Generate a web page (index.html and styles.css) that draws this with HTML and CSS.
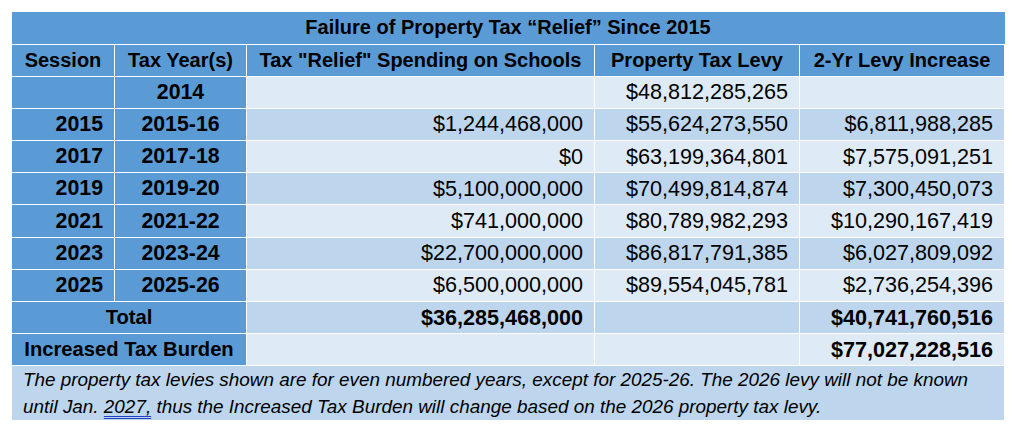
FILE: index.html
```html
<!DOCTYPE html>
<html lang="en">
<head>
<meta charset="utf-8">
<title>Failure of Property Tax Relief Since 2015</title>
<link rel="stylesheet" href="styles.css">
</head>
<body>
<div class="page">
<table class="levy">
  <colgroup>
    <col class="c1"><col class="c2"><col class="c3"><col class="c4"><col class="c5">
  </colgroup>
  <thead>
    <tr class="title-row"><th colspan="5">Failure of Property Tax “Relief” Since 2015</th></tr>
    <tr class="head-row">
      <th>Session</th>
      <th>Tax Year(s)</th>
      <th>Tax "Relief" Spending on Schools</th>
      <th>Property Tax Levy</th>
      <th>2-Yr Levy Increase</th>
    </tr>
  </thead>
  <tbody>
    <tr class="light">
      <th class="sess"></th><th class="yr">2014</th>
      <td></td><td>$48,812,285,265</td><td></td>
    </tr>
    <tr class="mid">
      <th class="sess">2015</th><th class="yr">2015-16</th>
      <td>$1,244,468,000</td><td>$55,624,273,550</td><td>$6,811,988,285</td>
    </tr>
    <tr class="light">
      <th class="sess">2017</th><th class="yr">2017-18</th>
      <td>$0</td><td>$63,199,364,801</td><td>$7,575,091,251</td>
    </tr>
    <tr class="mid">
      <th class="sess">2019</th><th class="yr">2019-20</th>
      <td>$5,100,000,000</td><td>$70,499,814,874</td><td>$7,300,450,073</td>
    </tr>
    <tr class="light">
      <th class="sess">2021</th><th class="yr">2021-22</th>
      <td>$741,000,000</td><td>$80,789,982,293</td><td>$10,290,167,419</td>
    </tr>
    <tr class="mid">
      <th class="sess">2023</th><th class="yr">2023-24</th>
      <td>$22,700,000,000</td><td>$86,817,791,385</td><td>$6,027,809,092</td>
    </tr>
    <tr class="light">
      <th class="sess">2025</th><th class="yr">2025-26</th>
      <td>$6,500,000,000</td><td>$89,554,045,781</td><td>$2,736,254,396</td>
    </tr>
    <tr class="mid total">
      <th colspan="2" class="lbl">Total</th>
      <td class="strong">$36,285,468,000</td><td></td><td class="strong">$40,741,760,516</td>
    </tr>
    <tr class="light total">
      <th colspan="2" class="lbl">Increased Tax Burden</th>
      <td></td><td></td><td class="strong">$77,027,228,516</td>
    </tr>
    <tr class="note-row">
      <td colspan="5" class="note"><span class="line">The property tax levies shown are for even numbered years, except for 2025-26. The 2026 levy will not be known</span> <span class="line">until Jan. <span class="mark">2027,</span> thus the Increased Tax Burden will change based on the 2026 property tax levy.</span></td>
    </tr>
  </tbody>
</table>
</div>
</body>
</html>
```

FILE: styles.css
```css
html, body {
  margin: 0;
  padding: 0;
  background: #ffffff;
}

.page {
  padding: 12px 11px;
}

.levy {
  width: 993px;
  border-collapse: collapse;
  table-layout: fixed;
  font-family: "Liberation Sans", Arial, sans-serif;
  color: #000;
}

.c1 { width: 103px; }
.c2 { width: 132px; }
.c3 { width: 348px; }
.c4 { width: 205px; }
.c5 { width: 205px; }

.levy th,
.levy td {
  border: 1px solid #ffffff;
  padding: 0 11px;
  height: 32.2px;
  box-sizing: border-box;
  vertical-align: middle;
  white-space: nowrap;
}

.levy thead th {
  background: #5b9bd5;
  font-size: 20px;
  font-weight: bold;
  text-align: center;
  padding: 0 4px;
}

.title-row th {
  height: 32px;
  border-top: none;
  border-left: none;
  border-right: none;
}

.levy tbody th {
  background: #5b9bd5;
  font-size: 21.3px;
  font-weight: bold;
}

.sess {
  text-align: right;
}

.yr {
  text-align: center;
}

.levy tbody th.lbl {
  text-align: center;
  font-size: 20.2px;
}

.levy td {
  font-size: 21.6px;
  text-align: right;
}

.light td { background: #deeaf6; }
.mid td { background: #bdd6ee; }

.strong {
  font-weight: bold;
}

.note-row td.note {
  background: #bdd6ee;
  text-align: left;
  white-space: normal;
  font-style: italic;
  font-size: 18.9px;
  line-height: 27px;
  padding: 0 11px;
  height: 54px;
  border-bottom: none;
}

.note .line {
  display: block;
}

.mark {
  text-decoration: underline double #1f3fc4;
  text-decoration-thickness: 1px;
  text-underline-offset: 3px;
}
```
